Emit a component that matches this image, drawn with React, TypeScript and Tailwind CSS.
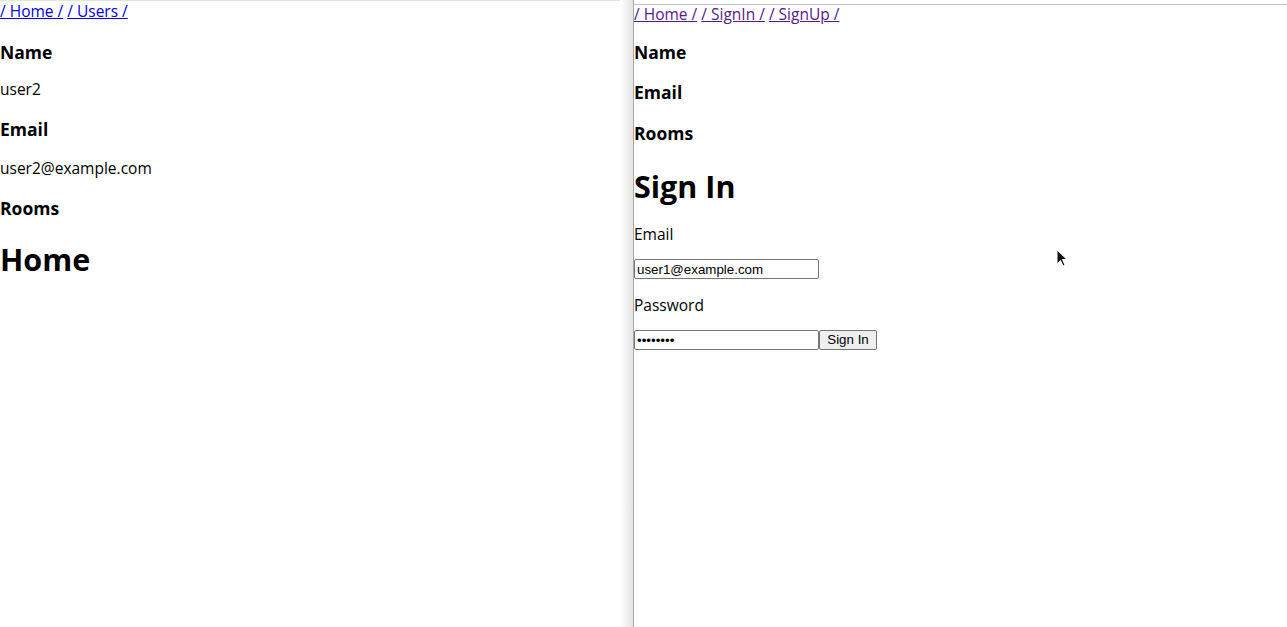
import React from 'react';

const App: React.FC = () => {
  return (
    <div className="relative flex h-[627px] w-[1287px] overflow-hidden bg-white text-black font-['Open_Sans','Noto_Sans',sans-serif]">
      {/* left window */}
      <div className="w-[620px] shrink-0 border-t border-[#d8ebd8] text-[15.5px]">
        <div className="mt-[1px] leading-[18px]">
          <a href="#" className="text-[#0000ee] underline">/ Home /</a>{' '}
          <a href="#" className="text-[#0000ee] underline">/ Users /</a>
        </div>
        <h4 className="mt-[23px] text-[17.5px] font-bold leading-[18px]">Name</h4>
        <p className="mt-[19px] leading-[18px]">user2</p>
        <h4 className="mt-[22px] text-[17.5px] font-bold leading-[18px]">Email</h4>
        <p className="mt-[21px] leading-[18px]">user2@example.com</p>
        <h4 className="mt-[22px] text-[17.5px] font-bold leading-[18px]">Rooms</h4>
        <h1 className="mt-[24px] text-[30.5px] font-bold leading-[36px]">Home</h1>
      </div>

      {/* window shadow */}
      <div className="w-[13px] shrink-0 bg-gradient-to-r from-white to-[#e4e4e4]" />
      <div className="w-px shrink-0 bg-[#a9a9a9]" />

      {/* right window */}
      <div className="flex-1 pt-[4px] text-[15.5px]">
        <div className="border-t border-[#c4c4c4]">
          <div className="leading-[18px]">
            <a href="#" className="text-[#551a8b] underline">/ Home /</a>{' '}
            <a href="#" className="text-[#551a8b] underline">/ SignIn /</a>{' '}
            <a href="#" className="text-[#551a8b] underline">/ SignUp /</a>
          </div>
          <h4 className="mt-[20px] text-[17.5px] font-bold leading-[18px]">Name</h4>
          <h4 className="mt-[22px] text-[17.5px] font-bold leading-[18px]">Email</h4>
          <h4 className="mt-[23px] text-[17.5px] font-bold leading-[18px]">Rooms</h4>
          <h1 className="mt-[26px] text-[30.5px] font-bold leading-[36px]">Sign In</h1>
          <form onSubmit={(e) => e.preventDefault()}>
            <label className="mt-[21px] block leading-[18px]">Email</label>
            <input
              type="text"
              defaultValue="user1@example.com"
              className="mt-[16px] block h-[20px] w-[185px] rounded-[2px] border border-[#767676] px-[2px] text-[13.33px] leading-[16px] font-['Liberation_Sans',Arial,sans-serif]"
            />
            <label className="mt-[17px] block leading-[18px]">Password</label>
            <div className="mt-[16px] flex">
              <input
                type="password"
                defaultValue="password"
                className="block h-[20px] w-[185px] rounded-[2px] border border-[#767676] px-[2px] text-[13.33px] leading-[16px] font-['Liberation_Sans',Arial,sans-serif]"
              />
              <button
                type="submit"
                className="h-[20px] w-[58px] rounded-[2px] border border-[#767676] bg-[#efefef] text-[13.33px] leading-[16px] font-['Liberation_Sans',Arial,sans-serif]"
              >
                Sign In
              </button>
            </div>
          </form>
        </div>
      </div>

      {/* mouse pointer */}
      <svg className="absolute left-[1056px] top-[249px]" width="12" height="19" viewBox="0 0 12 19">
        <path d="M1 1 L1 15 L4.5 11.5 L7 17 L9 16 L6.5 10.5 L11 10.5 Z" fill="#111" stroke="#fff" strokeWidth="1" />
      </svg>
    </div>
  );
};

export default App;
